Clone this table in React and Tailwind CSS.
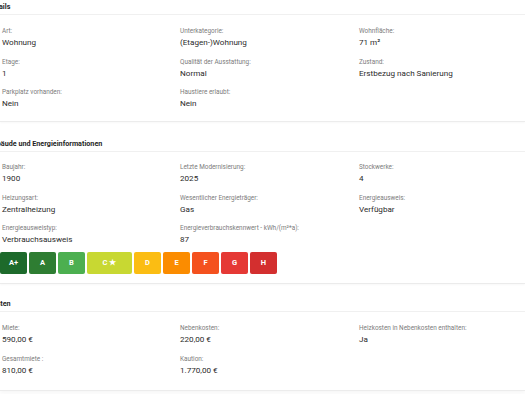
import React from "react";

function Field({ label, value }) {
  return (
    <div>
      <div className="text-[6.4px] leading-[10px] text-[#7c7c7c]">{label}</div>
      <div className="text-[8.1px] leading-[12px] font-[380] text-[#2a2a2a]">{value}</div>
    </div>
  );
}

function Header({ title }) {
  return (
    <div className="h-[15px] flex items-center border-b border-[#f0f0f0]">
      <span className="ml-[-12px] text-[7.2px] font-bold text-[#1f1f1f] whitespace-nowrap">{title}</span>
    </div>
  );
}

const energy = [
  { l: "A+", c: "bg-[#1d6a2b]", w: "w-[27px]" },
  { l: "A", c: "bg-[#2e7d32]", w: "w-[27px]" },
  { l: "B", c: "bg-[#4caf50]", w: "w-[27px]" },
  { l: "C ★", c: "bg-[#c8d832]", w: "w-[45px]" },
  { l: "D", c: "bg-[#fbbd13]", w: "w-[27px]" },
  { l: "E", c: "bg-[#fb8c00]", w: "w-[27px]" },
  { l: "F", c: "bg-[#f4511e]", w: "w-[27px]" },
  { l: "G", c: "bg-[#e53935]", w: "w-[27px]" },
  { l: "H", c: "bg-[#d32f2f]", w: "w-[27px]" },
];

export default function App() {
  return (
    <div className="w-[525px] h-[394px] overflow-hidden bg-white font-['Roboto',sans-serif]">
      {/* Details */}
      <div className="border-b border-[#ececec] shadow-[0_1px_2px_rgba(0,0,0,0.03)]">
        <Header title="Details" />
        <div className="pt-[11px] pb-[12px] pl-[2px] grid grid-cols-[178px_179px_1fr] gap-y-[8.5px]">
          <Field label="Art:" value="Wohnung" />
          <Field label="Unterkategorie:" value="(Etagen-)Wohnung" />
          <Field label="Wohnfläche:" value="71 m²" />
          <Field label="Etage:" value="1" />
          <Field label="Qualität der Ausstattung:" value="Normal" />
          <Field label="Zustand:" value="Erstbezug nach Sanierung" />
          <Field label="Parkplatz vorhanden:" value="Nein" />
          <Field label="Haustiere erlaubt:" value="Nein" />
        </div>
      </div>

      {/* Gebäude */}
      <div className="pt-[15px] border-b border-[#ececec] shadow-[0_1px_2px_rgba(0,0,0,0.03)]">
        <Header title="Gebäude und Energieinformationen" />
        <div className="pt-[10px] pl-[2px] grid grid-cols-[178px_179px_1fr] gap-y-[8.5px]">
          <Field label="Baujahr:" value="1900" />
          <Field label="Letzte Modernisierung:" value="2025" />
          <Field label="Stockwerke:" value="4" />
          <Field label="Heizungsart:" value="Zentralheizung" />
          <Field label="Wesentlicher Energieträger:" value="Gas" />
          <Field label="Energieausweis:" value="Verfügbar" />
          <Field label="Energieausweistyp:" value="Verbrauchsausweis" />
          <Field label="Energieverbrauchskennwert - kWh/(m²*a):" value="87" />
        </div>
        <div className="mt-[7px] mb-[9px] flex gap-[2px]">
          {energy.map((e) => (
            <div
              key={e.l}
              className={`${e.c} ${e.w} h-[22px] rounded-[2px] flex items-center justify-center text-white text-[7.5px] font-bold`}
            >
              {e.l}
            </div>
          ))}
        </div>
      </div>

      {/* Kosten */}
      <div className="pt-[13px] border-b border-[#ececec] shadow-[0_2px_4px_rgba(0,0,0,0.04)]">
        <Header title="Kosten" />
        <div className="pt-[11px] pb-[14.5px] pl-[2px] grid grid-cols-[178px_179px_1fr] gap-y-[8.5px]">
          <Field label="Miete:" value="590,00 €" />
          <Field label="Nebenkosten:" value="220,00 €" />
          <Field label="Heizkosten in Nebenkosten enthalten:" value="Ja" />
          <Field label="Gesamtmiete :" value="810,00 €" />
          <Field label="Kaution:" value="1.770,00 €" />
        </div>
      </div>
    </div>
  );
}
